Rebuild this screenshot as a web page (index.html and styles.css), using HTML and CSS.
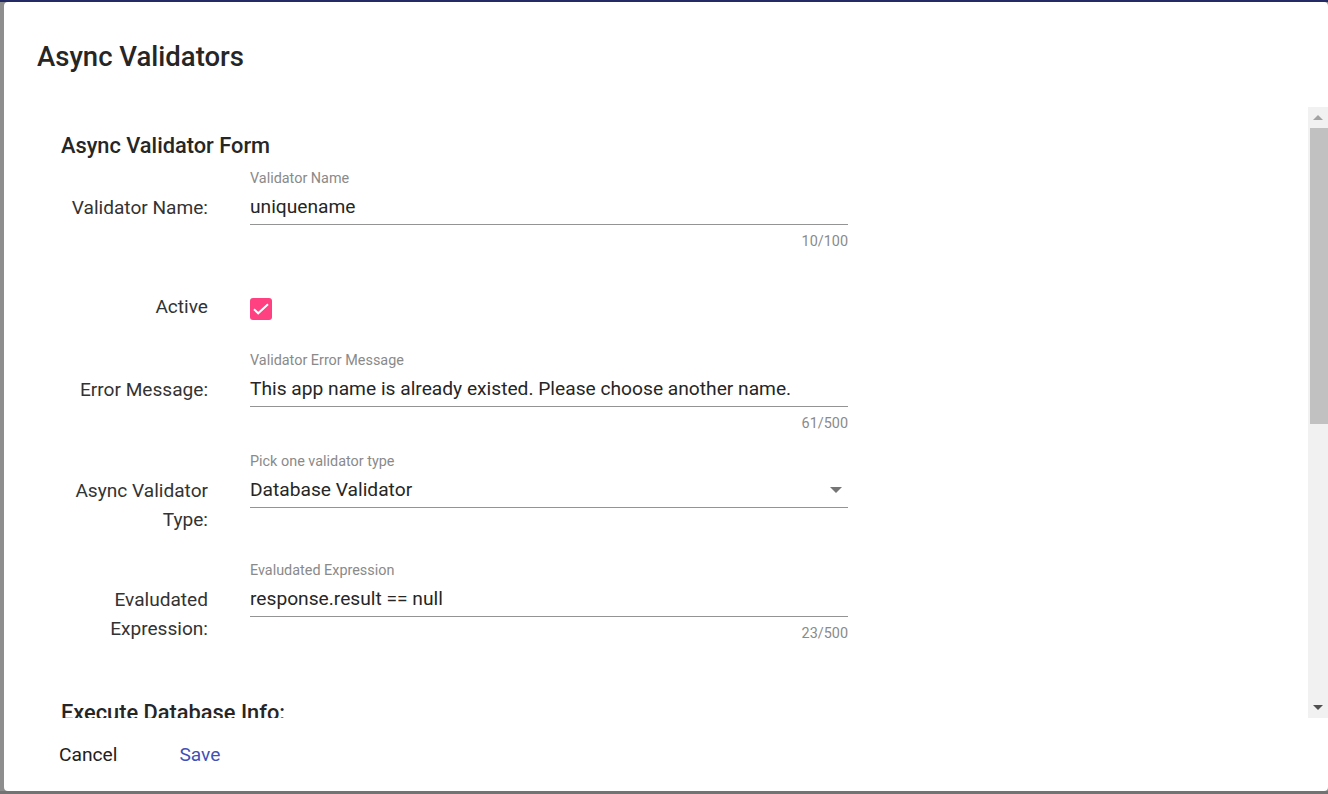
FILE: index.html
```html
<!DOCTYPE html>
<html>
<head>
<meta charset="utf-8">
<link rel="stylesheet" href="styles.css">
</head>
<body>
<div class="topbar"></div>
<div class="stage">
  <div class="dialog">
    <h1 class="title">Async Validators</h1>
    <div class="content-wrap">
      <div class="content">
        <h2 class="section">Async Validator Form</h2>

        <div class="row row-name">
          <div class="label">Validator Name:</div>
          <div class="field">
            <div class="flabel">Validator Name</div>
            <div class="input">uniquename</div>
            <div class="hint">10/100</div>
          </div>
        </div>

        <div class="row row-active">
          <div class="label label-plain">Active</div>
          <div class="field">
            <span class="checkbox">
              <svg width="22" height="22" viewBox="0 0 22 22"><path d="M4 11.3 L8.2 15.3 L18 6.3" fill="none" stroke="#fff" stroke-width="2"/></svg>
            </span>
          </div>
        </div>

        <div class="row row-error">
          <div class="label">Error Message:</div>
          <div class="field">
            <div class="flabel">Validator Error Message</div>
            <div class="input">This app name is already existed. Please choose another name.</div>
            <div class="hint">61/500</div>
          </div>
        </div>

        <div class="row row-type">
          <div class="label">Async Validator Type:</div>
          <div class="field">
            <div class="flabel">Pick one validator type</div>
            <div class="input select">
              <span>Database Validator</span>
              <svg class="arrow" width="12" height="6" viewBox="0 0 12 6"><path d="M0 0 L12 0 L6 6 Z" fill="#757575"/></svg>
            </div>
          </div>
        </div>

        <div class="row row-expr">
          <div class="label">Evaludated Expression:</div>
          <div class="field">
            <div class="flabel">Evaludated Expression</div>
            <div class="input">response.result == null</div>
            <div class="hint">23/500</div>
          </div>
        </div>

        <h2 class="section section-db">Execute Database Info:</h2>
      </div>
      <div class="scrollbar">
        <div class="sb-btn sb-up"><svg width="10" height="5" viewBox="0 0 10 5"><path d="M0 5 L5 0 L10 5 Z" fill="#a3a3a3"/></svg></div>
        <div class="sb-track"><div class="sb-thumb"></div></div>
        <div class="sb-btn sb-down"><svg width="10" height="5" viewBox="0 0 10 5"><path d="M0 0 L10 0 L5 5 Z" fill="#505050"/></svg></div>
      </div>
    </div>
    <div class="actions">
      <button class="btn btn-cancel">Cancel</button>
      <button class="btn btn-save">Save</button>
    </div>
  </div>
</div>
<div class="bottombar"></div>
</body>
</html>
```
FILE: styles.css
```css
html, body {
  margin: 0;
  padding: 0;
}
body {
  width: 1328px;
  height: 794px;
  overflow: hidden;
  background: #8e8e8e;
  font-family: Roboto, "Liberation Sans", sans-serif;
  color: #212121;
}
.topbar {
  height: 2px;
  background: #232a66;
}
.stage {
  padding-left: 4px;
}
.bottombar {
  height: 3px;
  background: #737373;
}
.dialog {
  box-sizing: border-box;
  width: 1324px;
  height: 789px;
  background: #fff;
  border-radius: 4px;
  padding: 39px 0 0 33px;
}
.title {
  margin: 0 0 34px 0;
  font-size: 27.5px;
  line-height: 32px;
  font-weight: 500;
  color: #262626;
}
.content-wrap {
  display: flex;
  height: 611px;
}
.content {
  flex: 1;
  overflow: hidden;
  padding: 27px 0 0 24px;
}
.section {
  margin: 0 0 13px 0;
  font-size: 21.8px;
  line-height: 24px;
  font-weight: 500;
  color: #262626;
}
.section-db {
  margin-top: 58px;
}
.row {
  display: flex;
  align-items: flex-start;
}
.label {
  width: 147px;
  flex: none;
  margin-right: 42px;
  padding-top: 21.5px;
  text-align: right;
  font-size: 19.1px;
  line-height: 29px;
  color: #333;
}
.label-plain {
  padding-top: 0;
}
.field {
  width: 598px;
  flex: none;
}
.flabel {
  font-size: 14.4px;
  line-height: 16px;
  color: #8a8a8a;
}
.input {
  margin-top: 8px;
  font-size: 19.2px;
  line-height: 24px;
  padding-bottom: 5px;
  border-bottom: 1px solid #949494;
  color: #262626;
  white-space: nowrap;
}
.select {
  display: flex;
  justify-content: space-between;
  align-items: center;
}
.arrow {
  margin-right: 6px;
}
.hint {
  margin-top: 9px;
  font-size: 14.4px;
  line-height: 16px;
  text-align: right;
  color: #8a8a8a;
}
.row-name {
  margin-bottom: 42px;
}
.row-active {
  margin-bottom: 32px;
}
.row-error {
  margin-bottom: 22px;
}
.row-type {
  margin-bottom: 29.5px;
}
.checkbox {
  display: block;
  width: 22px;
  height: 22px;
  margin-top: 6px;
  background: #ff4081;
  border-radius: 3px;
}
.checkbox svg {
  display: block;
}
.scrollbar {
  width: 20px;
  flex: none;
  display: flex;
  flex-direction: column;
  background: #f1f1f1;
}
.sb-btn {
  height: 21px;
  display: flex;
  align-items: center;
  justify-content: center;
  flex: none;
}
.sb-track {
  flex: 1;
}
.sb-thumb {
  margin-left: 2px;
  height: 296px;
  background: #c1c1c1;
}
.actions {
  display: flex;
  margin-top: 19px;
  margin-left: 6px;
}
.btn {
  border: 0;
  background: none;
  font-family: Roboto, "Liberation Sans", sans-serif;
  font-size: 19.2px;
  line-height: 36px;
  padding: 0 16px;
  font-weight: 400;
  cursor: pointer;
}
.btn-cancel {
  color: #212121;
}
.btn-save {
  margin-left: 30px;
  color: #3f51b5;
}
```
